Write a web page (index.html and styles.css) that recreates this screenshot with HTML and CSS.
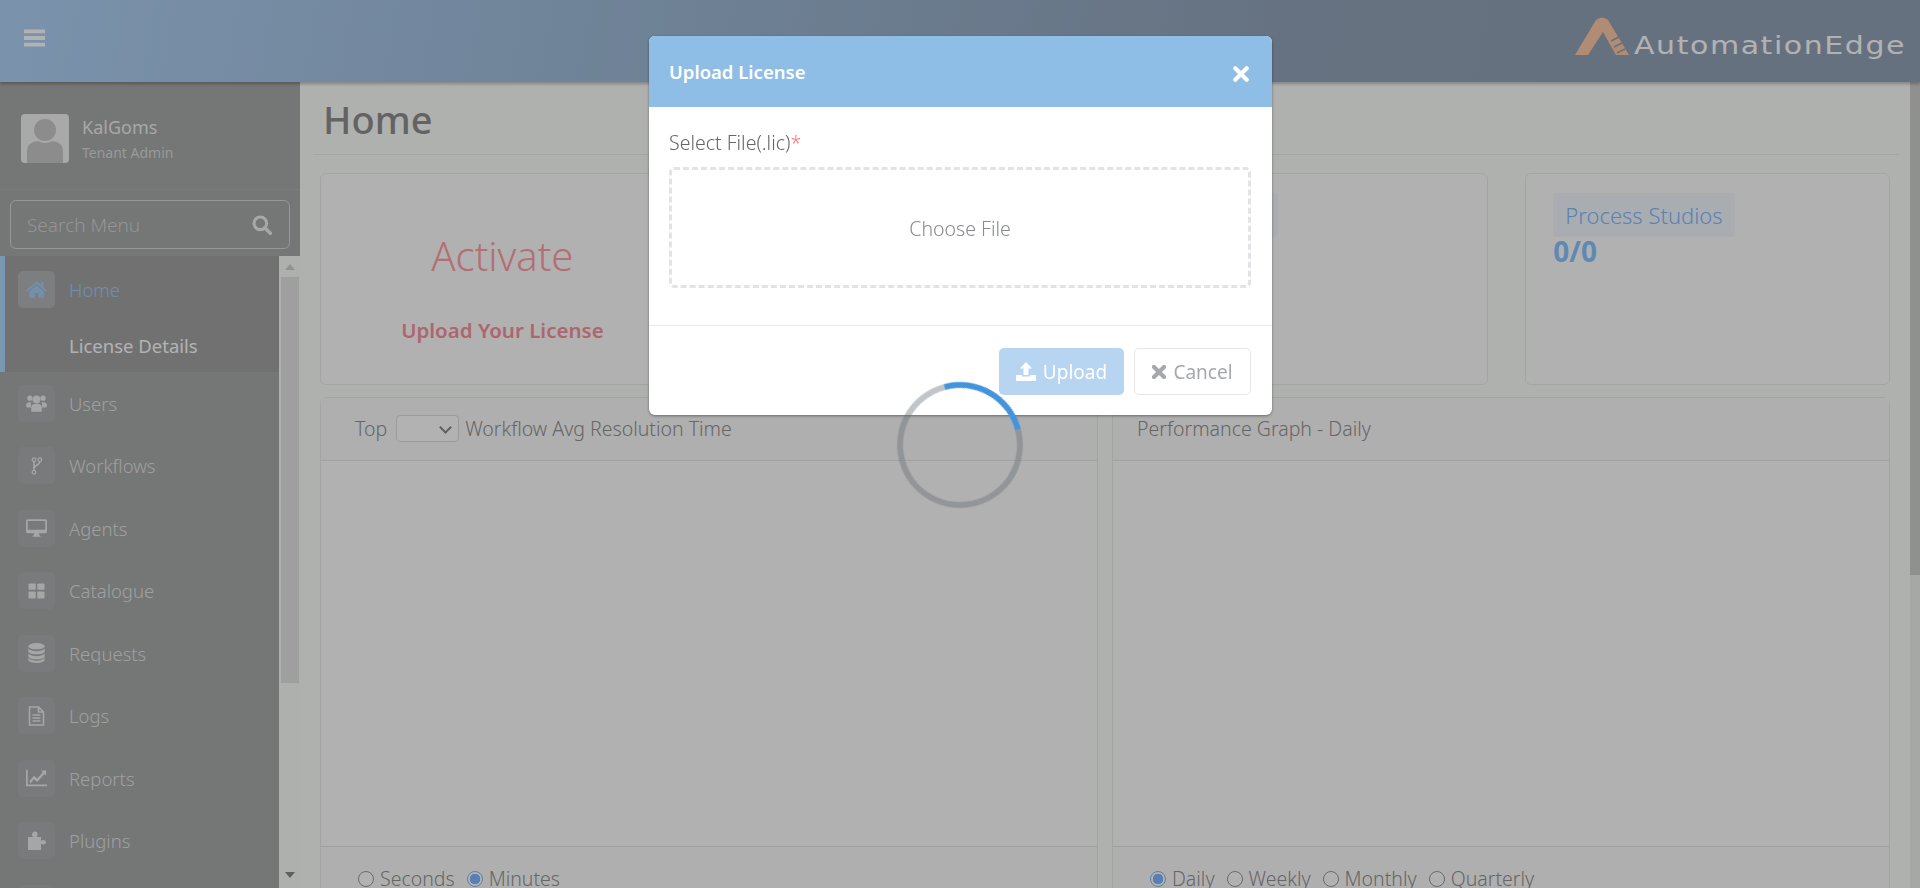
FILE: index.html
```html
<!DOCTYPE html>
<html lang="en">
<head>
  <meta charset="UTF-8">
  <title>AutomationEdge - Home</title>
  <link rel="stylesheet" href="styles.css">
</head>
<body>

<header class="topbar">
  <svg class="menu-icon" viewBox="0 0 22 18"><path d="M0 0h22v4H0zM0 7h22v4H0zM0 14h22v4H0z"/></svg>
  <div class="logo">
    <svg class="logo-mark" viewBox="0 0 54 38">
      <path d="M0 38 L21 3 Q27 -2 33 3 L54 38 H41 L28 15 L13 38 Z"/>
      <path class="logo-cut" d="M36 24l8-4M39 30l8-4M42 36l8-4"/>
    </svg>
    <span class="logo-text">AutomationEdge</span>
  </div>
</header>

<div class="page">
  <aside class="sidebar">
    <div class="user-panel">
      <svg class="avatar" viewBox="0 0 48 49">
        <rect width="48" height="49" rx="4" fill="#f2f2f2"/>
        <circle cx="24" cy="16" r="11" fill="#c9c9c9"/>
        <path d="M6 49V37q0-9 11-10q7 4 14 0q11 1 11 10v12z" fill="#c9c9c9"/>
      </svg>
      <div>
        <div class="user-name">KalGoms</div>
        <div class="user-role">Tenant Admin</div>
      </div>
    </div>
    <div class="search-wrap">
      <div class="search-box">
        <span>Search Menu</span>
        <svg viewBox="0 0 18 18"><circle cx="7.5" cy="7.5" r="5.7" fill="none" stroke="currentColor" stroke-width="2.8"/><path d="M11.5 11.500l5 5" stroke="currentColor" stroke-width="3.2" stroke-linecap="round"/></svg>
      </div>
    </div>
    <div class="nav-wrap">
      <nav class="nav">
        <div class="nav-group">
          <a class="nav-item active">
            <span class="nav-icon"><svg viewBox="0 0 24 20"><path d="M12 1L0 11.500L1.500 13L12 4L22.500 13L24 11.500L20 8V2H17V5zM12 5.500L3.500 13V20H10V14.500H14V20H20.500V13z"/></svg></span>
            Home
          </a>
          <a class="nav-sub">License Details</a>
        </div>
        <a class="nav-item">
          <span class="nav-icon"><svg viewBox="0 0 24 20"><circle cx="12" cy="6" r="4.500"/><circle cx="4.500" cy="4.500" r="3"/><circle cx="19.500" cy="4.500" r="3"/><path d="M0 13q0-4 4-4h2q-1 3 0 6H1zM24 13q0-4-4-4h-2q1 3 0 6h5zM6 20v-5q0-4 4-4h4q4 0 4 4v5z"/></svg></span>
          Users
        </a>
        <a class="nav-item">
          <span class="nav-icon"><svg viewBox="-3 -1 20 24"><path fill="none" stroke="currentColor" stroke-width="2" d="M4 5v12M11 5c0 6-7 4-7 9"/><circle cx="4" cy="3.500" r="2.200" fill="none" stroke="currentColor" stroke-width="1.500"/><circle cx="11" cy="3.500" r="2.200" fill="none" stroke="currentColor" stroke-width="1.500"/><circle cx="4" cy="18.500" r="2.200" fill="none" stroke="currentColor" stroke-width="1.500"/></svg></span>
          Workflows
        </a>
        <a class="nav-item">
          <span class="nav-icon"><svg viewBox="0 0 24 20"><path fill-rule="evenodd" d="M2 0h20q2 0 2 2v12q0 2-2 2h-7v2l2 2H7l2-2v-2H2q-2 0-2-2V2q0-2 2-2zm0 2v10h20V2z"/></svg></span>
          Agents
        </a>
        <a class="nav-item">
          <span class="nav-icon"><svg viewBox="-3 -3 26 25"><rect width="9" height="8" rx="1"/><rect x="11" width="9" height="8" rx="1"/><rect y="10" width="9" height="9" rx="1"/><rect x="11" y="10" width="9" height="9" rx="1"/></svg></span>
          Catalogue
        </a>
        <a class="nav-item">
          <span class="nav-icon"><svg viewBox="-1 0 20 22"><ellipse cx="9" cy="3.500" rx="9" ry="3.500"/><path d="M0 6q3 3 9 3t9-3v3.500q-2 3-9 3t-9-3zM0 11.500q3 3 9 3t9-3V15q-2 3-9 3t-9-3zM0 16.500q3 3 9 3t9-3V19q-2 3-9 3t-9-3z"/></svg></span>
          Requests
        </a>
        <a class="nav-item">
          <span class="nav-icon"><svg viewBox="0 0 16 20"><path fill="none" stroke="currentColor" stroke-width="1.600" d="M1 1h9l5 5v13H1zM10 1v5h5"/><path stroke="currentColor" stroke-width="1.500" d="M4 9h8M4 12h8M4 15h8"/></svg></span>
          Logs
        </a>
        <a class="nav-item">
          <span class="nav-icon"><svg viewBox="0 0 24 19"><path d="M0 0h2v17h22v2H0z"/><path d="M4 13l5-6 4 3 6-7-2-2h6v6l-2-2-8 9-4-3-4 5z"/></svg></span>
          Reports
        </a>
        <a class="nav-item">
          <span class="nav-icon"><svg viewBox="0 0 21 20"><path d="M2 6H7Q5.500 4 6 2.500Q7 0.500 9 0.500Q11.500 0.500 11.500 2.500Q11.500 4 11 6H15V10Q16 9 17.500 9Q20 9.500 20 11.500Q20 13.500 17.500 13.500Q16 13.500 15 12.500V19H2z"/></svg></span>
          Plugins
        </a>
        <a class="nav-item">
          <span class="nav-icon"></span>
        </a>
      </nav>
      <div class="side-scroll">
        <span class="arrow-up"></span>
        <span class="side-thumb"></span>
        <span class="arrow-down"></span>
      </div>
    </div>
  </aside>

  <main class="main">
    <div class="title-row">
      <h1>Home</h1>
    </div>
    <section class="cards">
      <div class="card card-activate">
        <div class="activate-title">Activate</div>
        <div class="activate-sub">Upload Your License</div>
      </div>
      <div class="card"></div>
      <div class="card">
        <span class="badge badge-wide">Agents</span>
        <div class="count">0/0</div>
      </div>
      <div class="card">
        <span class="badge">Process Studios</span>
        <div class="count">0/0</div>
      </div>
    </section>
    <section class="panels">
      <div class="panel">
        <div class="panel-head">
          Top
          <span class="select-wrap"><select class="top-select"></select></span>
          Workflow Avg Resolution Time
        </div>
        <div class="panel-body"></div>
        <div class="panel-foot">
          <label><input type="radio" name="unit"> Seconds</label>
          <label><input type="radio" name="unit" checked> Minutes</label>
        </div>
      </div>
      <div class="panel">
        <div class="panel-head">Performance Graph - Daily</div>
        <div class="panel-body"></div>
        <div class="panel-foot">
          <label><input type="radio" name="range" checked> Daily</label>
          <label><input type="radio" name="range"> Weekly</label>
          <label><input type="radio" name="range"> Monthly</label>
          <label><input type="radio" name="range"> Quarterly</label>
        </div>
      </div>
    </section>
  </main>
  <div class="page-scroll"><span></span></div>
</div>

<div class="backdrop"></div>

<div class="modal">
  <div class="modal-head">
    <span>Upload License</span>
    <svg viewBox="0 0 14 14"><path d="M2 2l10 10M12 2L2 12" stroke="#fff" stroke-width="3.600" stroke-linecap="round"/></svg>
  </div>
  <div class="modal-body">
    <div class="field-label">Select File(.lic)<span class="req">*</span></div>
    <div class="dropzone">Choose File</div>
  </div>
  <div class="modal-foot">
    <button class="btn btn-upload">
      <svg viewBox="0 0 20 19"><path d="M10 0l6 6.500h-3.500V13h-5V6.500H4zM0 13h6v1.500h8V13h6v6H0z"/></svg>
      Upload
    </button>
    <button class="btn btn-cancel">
      <svg viewBox="0 0 14 14"><path d="M2 2l10 10M12 2L2 12" stroke="currentColor" stroke-width="4.200" stroke-linecap="round"/></svg>
      Cancel
    </button>
  </div>
</div>

<div class="spinner"></div>

</body>
</html>
```

FILE: styles.css
```css
* {
  margin: 0;
  padding: 0;
  box-sizing: border-box;
}

html, body {
  height: 100%;
  overflow: hidden;
}

body {
  font-family: "Noto Sans", "Open Sans", sans-serif;
  background: #fbfefb;
  color: #929292;
  display: flex;
  flex-direction: column;
}

/* top bar */
.topbar {
  height: 82px;
  flex-shrink: 0;
  background: linear-gradient(100deg, #b0d2f7 0%, #9fbbd8 33%, #92a3b9 68%, #92a3b7 100%);
  box-shadow: 0 2px 3px rgba(0, 0, 0, 0.25);
  display: flex;
  align-items: center;
  justify-content: space-between;
  padding: 0 13px 0 24px;
  position: relative;
  z-index: 2;
}

.menu-icon {
  width: 21px;
  height: 18px;
  fill: #fff;
  margin-top: -7px;
}

.logo {
  display: flex;
  align-items: flex-end;
  gap: 5px;
  margin-top: -10px;
}

.logo-mark {
  width: 54px;
  height: 38px;
  fill: #fcc9a6;
}

.logo-cut {
  fill: none;
  stroke: #92a3b7;
  stroke-width: 1.6;
}

.logo-text {
  width: 273px;
  font-family: "DejaVu Sans", sans-serif;
  font-size: 25px;
  line-height: 26px;
  letter-spacing: 1.3px;
  margin-bottom: -4px;
  color: #fff;
  white-space: nowrap;
  transform: scaleX(1.2);
  transform-origin: left center;
}

/* layout */
.page {
  flex: 1;
  display: flex;
  min-height: 0;
}

.sidebar {
  width: 300px;
  flex-shrink: 0;
  background: #a8a9aa;
  display: flex;
  flex-direction: column;
  color: #e4e4e4;
}

.user-panel {
  height: 108px;
  display: flex;
  align-items: center;
  gap: 13px;
  padding: 6px 0 0 21px;
  border-bottom: 1px solid #b0b1b2;
}

.avatar {
  width: 48px;
  height: 49px;
}

.user-name {
  font-size: 18px;
  line-height: 24px;
  margin-top: 1px;
  color: #f0f0f0;
}

.user-role {
  font-size: 14px;
  line-height: 22px;
  margin-top: 3px;
  color: #dcdcdc;
}

.search-wrap {
  padding: 10px 10px 7px;
}

.search-box {
  height: 49px;
  border: 1px solid #d8d8d8;
  border-radius: 6px;
  display: flex;
  align-items: center;
  justify-content: space-between;
  padding: 0 17px 0 16px;
  font-size: 19px;
  font-weight: 300;
  color: #d4d4d4;
}

.search-box svg {
  width: 20px;
  height: 20px;
  color: #f0f0f0;
}

.nav-wrap {
  flex: 1;
  min-height: 0;
  display: flex;
  background: #fafcfa;
}

.nav {
  width: 279px;
  background: #a8a9aa;
  overflow: hidden;
}

.nav-group {
  background: #a2a3a4;
  border-left: 5px solid #b0daff;
  height: 116px;
}

.nav-group .nav-item {
  padding-left: 13px;
  height: 66px;
  color: #9fccff;
}

.nav-group .nav-icon {
  color: #a4cdf5;
  background: #b4b5b6;
}

.nav-sub {
  display: block;
  padding-left: 64px;
  font-size: 18.500px;
  line-height: 32px;
  margin-top: 8px;
  color: #fff;
}

.nav-item {
  display: flex;
  align-items: center;
  gap: 14px;
  height: 62.500px;
  padding-left: 18px;
  font-size: 18.500px;
  font-weight: 300;
}

.nav-icon {
  width: 37px;
  height: 37px;
  border-radius: 5px;
  background: #aeafb0;
  color: #eee;
  display: flex;
  align-items: center;
  justify-content: center;
}

.nav-icon svg {
  width: 21px;
  height: 20px;
  fill: currentColor;
}

.side-scroll {
  width: 21px;
  display: flex;
  flex-direction: column;
  align-items: center;
  position: relative;
  padding-top: 21px;
}

.side-thumb {
  width: 18px;
  height: 406px;
  background: #e4e4e4;
}

.arrow-up, .arrow-down {
  position: absolute;
  width: 0;
  height: 0;
  border-left: 5px solid transparent;
  border-right: 5px solid transparent;
}

.arrow-up {
  top: 8px;
  border-bottom: 6px solid #d0d0d0;
}

.arrow-down {
  top: 616px;
  border-top: 6px solid #888;
}

/* main area */
.main {
  flex: 1;
  min-width: 0;
  padding: 0 11px 0 13px;
}

.title-row {
  height: 73px;
  border-bottom: 1px solid #ebeeeb;
  padding: 9px 0 0 10px;
}

h1 {
  font-size: 38px;
  line-height: 56px;
  font-weight: 500;
  color: #8f8f8f;
}

.cards {
  display: grid;
  grid-template-columns: repeat(4, 1fr);
  gap: 37px;
  margin: 18px 9px 12px 7px;
}

.card {
  height: 212px;
  background: #fefefe;
  border: 1px solid #eaecea;
  border-radius: 6px;
  padding: 19px 27px;
}

.card-activate {
  text-align: center;
  padding: 57px 0 0;
}

.activate-title {
  font-size: 40px;
  line-height: 50px;
  font-weight: 300;
  color: #ff9fa8;
}

.activate-sub {
  font-size: 20.500px;
  font-weight: 600;
  line-height: 30px;
  margin-top: 34px;
  color: #f8929f;
}

.badge {
  display: inline-block;
  height: 44px;
  line-height: 44px;
  padding: 0 12px;
  border-radius: 4px;
  background: #f3f8ff;
  font-size: 22px;
  font-weight: 300;
  color: #80bcff;
}

.badge-wide {
  width: 126px;
}

.count {
  font-size: 28px;
  font-weight: 700;
  line-height: 28px;
  color: #89c4ff;
}

.panels {
  display: grid;
  grid-template-columns: 1fr 1fr;
  gap: 14px;
  margin: 0 9px 0 7px;
}

.panel {
  height: 640px;
  background: #fefefe;
  border: 1px solid #eaecea;
  border-radius: 6px;
}

.panel-head {
  height: 63px;
  border-bottom: 1px solid #e6e8e6;
  display: flex;
  align-items: center;
  gap: 6px;
  padding: 0 24px 1px;
  font-size: 19.500px;
  font-weight: 300;
  background: #fbfbfb;
}

.panel:first-child .panel-head {
  padding-left: 34px;
}

.select-wrap {
  position: relative;
  display: block;
  margin-left: 3px;
}

.select-wrap::after {
  content: "";
  position: absolute;
  right: 9px;
  top: 8px;
  width: 7px;
  height: 7px;
  border-right: 2px solid #8a8a8a;
  border-bottom: 2px solid #8a8a8a;
  transform: rotate(45deg);
}

.top-select {
  display: block;
  width: 63px;
  height: 27px;
  border: 1px solid #ddd;
  border-radius: 4px;
  background: #fff;
  appearance: none;
}

.panel-body {
  height: 385px;
}

.panel-foot {
  border-top: 1px solid #e4e6e4;
  background: #fbfbfb;
  padding: 18px 37px;
  display: flex;
  gap: 12px;
  font-size: 19.500px;
  font-weight: 300;
}

.panel-foot label {
  display: flex;
  align-items: center;
  gap: 6px;
}

.panel-foot input {
  width: 16px;
  height: 16px;
  appearance: none;
  border: 1px solid #999;
  border-radius: 50%;
  background: #fff;
}

.panel-foot input:checked {
  border-color: #89b8f0;
  background: radial-gradient(circle, #80b8ff 0 5px, #fff 5.500px);
}

.page-scroll {
  width: 10px;
  flex-shrink: 0;
  background: #f0f0f0;
}

.page-scroll span {
  display: block;
  height: 493px;
  background: #cfcfcf;
}

/* modal */
.backdrop {
  position: fixed;
  inset: 0;
  background: rgba(0, 0, 0, 0.3);
  z-index: 5;
}

.modal {
  position: fixed;
  left: 649px;
  top: 36px;
  width: 623px;
  height: 379px;
  background: #fff;
  border-radius: 6px;
  overflow: hidden;
  box-shadow: 0 1px 3px rgba(0, 0, 0, 0.4);
  z-index: 6;
}

.modal-head {
  height: 71px;
  background: #8ebde6;
  color: #fff;
  display: flex;
  align-items: center;
  justify-content: space-between;
  padding: 0 23px 0 20px;
  font-size: 18.500px;
  font-weight: 600;
}

.modal-head svg {
  width: 16px;
  height: 16px;
  margin-top: 4px;
}

.modal-body {
  height: 219px;
  padding: 23px 21px 0 20px;
  border-bottom: 1px solid #e9e9e9;
}

.field-label {
  font-size: 19.500px;
  font-weight: 300;
  line-height: 26px;
  color: #666;
  margin-bottom: 11px;
}

.req {
  color: #f77;
}

.dropzone {
  height: 121px;
  border: 3px dashed #e2e3e6;
  border-radius: 5px;
  display: flex;
  align-items: center;
  justify-content: center;
  padding-top: 1px;
  font-size: 19.500px;
  font-weight: 300;
  color: #888a8d;
}

.modal-foot {
  display: flex;
  justify-content: flex-end;
  gap: 10px;
  padding: 22px 21px 0 0;
}

.btn {
  height: 47px;
  border-radius: 5px;
  font-family: inherit;
  font-size: 19px;
  display: flex;
  align-items: center;
  justify-content: center;
  gap: 7px;
}

.btn svg {
  fill: currentColor;
}

.btn-upload {
  width: 125px;
  border: none;
  background: #b7d4f0;
  color: #fff;
}

.btn-upload svg {
  width: 20px;
  height: 19px;
}

.btn-cancel {
  width: 117px;
  border: 1px solid #e6e6e6;
  background: #fff;
  color: #a6a8ab;
}

.btn-cancel svg {
  width: 14px;
  height: 14px;
}

.spinner {
  position: fixed;
  left: 897px;
  top: 382px;
  width: 126px;
  height: 126px;
  border: 6px solid rgba(100, 110, 115, 0.4);
  border-top-color: #4494dc;
  border-radius: 50%;
  transform: rotate(30deg);
  z-index: 7;
}
```
